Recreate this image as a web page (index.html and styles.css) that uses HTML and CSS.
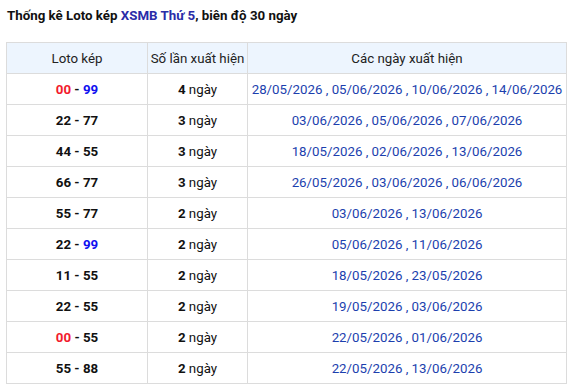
FILE: index.html
```html
<!DOCTYPE html>
<html lang="vi">
<head>
<meta charset="utf-8">
<link rel="stylesheet" href="styles.css">
</head>
<body>
<h2 class="title">Thống kê Loto kép <span class="hl">XSMB Thứ 5</span>, biên độ 30 ngày</h2>
<table class="stats">
<thead>
<tr><th class="c1">Loto kép</th><th class="c2">Số lần xuất hiện</th><th class="c3">Các ngày xuất hiện</th></tr>
</thead>
<tbody>
<tr><td class="pair"><span class="red">00</span> - <span class="blue">99</span></td><td><b>4</b> ngày</td><td class="dates">28/05/2026 , 05/06/2026 , 10/06/2026 , 14/06/2026</td></tr>
<tr><td class="pair">22 - 77</td><td><b>3</b> ngày</td><td class="dates">03/06/2026 , 05/06/2026 , 07/06/2026</td></tr>
<tr><td class="pair">44 - 55</td><td><b>3</b> ngày</td><td class="dates">18/05/2026 , 02/06/2026 , 13/06/2026</td></tr>
<tr><td class="pair">66 - 77</td><td><b>3</b> ngày</td><td class="dates">26/05/2026 , 03/06/2026 , 06/06/2026</td></tr>
<tr><td class="pair">55 - 77</td><td><b>2</b> ngày</td><td class="dates">03/06/2026 , 13/06/2026</td></tr>
<tr><td class="pair">22 - <span class="blue">99</span></td><td><b>2</b> ngày</td><td class="dates">05/06/2026 , 11/06/2026</td></tr>
<tr><td class="pair">11 - 55</td><td><b>2</b> ngày</td><td class="dates">18/05/2026 , 23/05/2026</td></tr>
<tr><td class="pair">22 - 55</td><td><b>2</b> ngày</td><td class="dates">19/05/2026 , 03/06/2026</td></tr>
<tr><td class="pair"><span class="red">00</span> - 55</td><td><b>2</b> ngày</td><td class="dates">22/05/2026 , 01/06/2026</td></tr>
<tr><td class="pair">55 - 88</td><td><b>2</b> ngày</td><td class="dates">22/05/2026 , 13/06/2026</td></tr>
</tbody>
</table>
</body>
</html>
```
FILE: styles.css
```css
html, body {
  margin: 0;
  padding: 0;
  background: #fff;
}
body {
  font-family: Roboto, "Liberation Sans", sans-serif;
  font-size: 13.3px;
  color: #111;
  padding: 6px 2px 0 6px;
}
.title {
  font-size: 13.3px;
  font-weight: 700;
  margin: 0 0 0 1px;
  line-height: 20px;
  color: #111;
}
.title .hl {
  color: #2a2ca8;
}
.stats {
  margin-top: 16px;
  width: 561px;
  border-collapse: collapse;
  table-layout: fixed;
}
.stats th, .stats td {
  border: 1px solid #dcdcdc;
  height: 28px;
  padding: 2px 0 0;
  text-align: center;
  vertical-align: middle;
  line-height: 18px;
  white-space: nowrap;
}
.stats th {
  background: #edf5fe;
  font-weight: 400;
  color: #222;
}
.c1 { width: 140px; }
.c2 { width: 99px; }
.stats td.pair {
  font-weight: 700;
}
.red { color: #f21b2d; }
.blue { color: #1010f0; }
.dates {
  color: #1c3fae;
}
.stats td b {
  font-weight: 700;
}
```
